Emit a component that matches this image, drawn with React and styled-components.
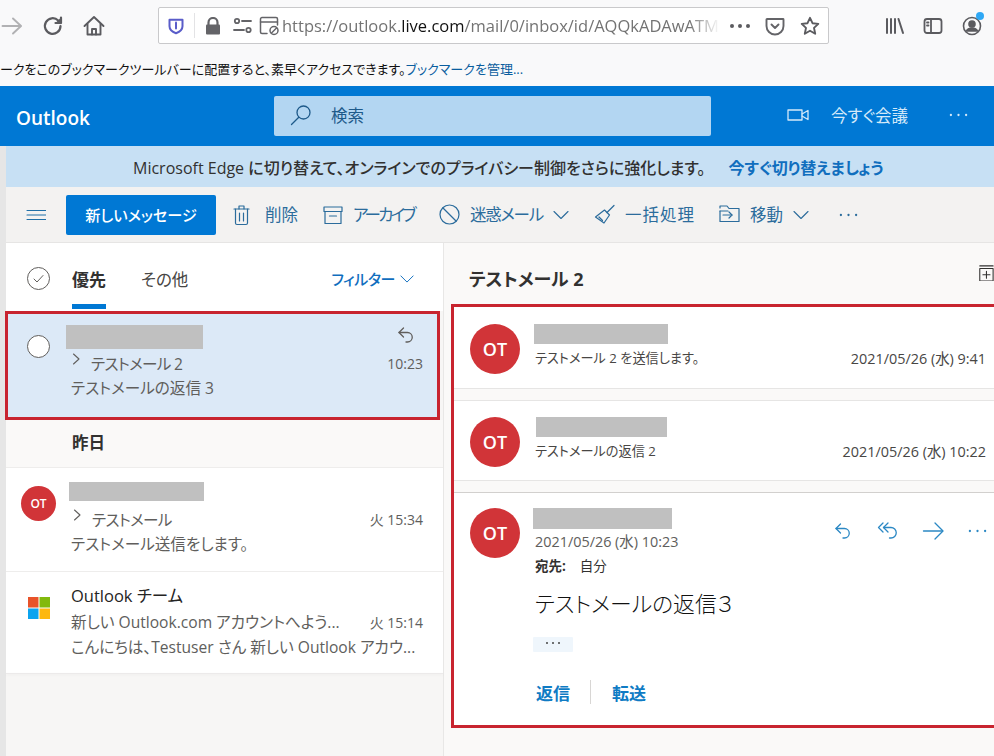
import React from 'react';
import styled, { createGlobalStyle } from 'styled-components';

const FONT = '"Open Sans", "Noto Sans CJK JP", sans-serif';

const GlobalStyle = createGlobalStyle`
  html, body {
    margin: 0;
    padding: 0;
    width: 994px;
    height: 756px;
    overflow: hidden;
    background: #ffffff;
    font-family: ${FONT};
    font-feature-settings: "palt";
  }
  * { box-sizing: border-box; }
`;

const Svg = ({ size = 20, w, h, vb = '0 0 20 20', color = 'currentColor', sw = 1.4, children, ...rest }) => (
  <svg
    width={w || size}
    height={h || size}
    viewBox={vb}
    fill="none"
    stroke={color}
    strokeWidth={sw}
    strokeLinecap="round"
    strokeLinejoin="round"
    style={{ flexShrink: 0, display: 'block' }}
    {...rest}
  >
    {children}
  </svg>
);

const Chevron = ({ size = 16, color }) => (
  <Svg size={size} vb="0 0 16 16" color={color} sw={1.1}><path d="M1 4.500l7 7 7-7" /></Svg>
);
const ChevronSlot = styled.span`
  display: block;
  margin-bottom: 8px;
`;
const ChevronRight = () => (
  <ChevronSlot>
    <Svg size={12} vb="0 0 12 12" color="#605e5c" sw={1.1}><path d="M3.500 1L9 6l-5.500 5" /></Svg>
  </ChevronSlot>
);
const ReplyIcon = ({ color = '#605e5c', size = 20 }) => (
  <Svg size={size} color={color} sw={1.3}>
    <path d="M7.500 3L3 7.500 7.500 12" /><path d="M3 7.500h8.500a4.700 4.700 0 0 1 0 9.500H10" />
  </Svg>
);
const ReplyAllIcon = ({ color }) => (
  <Svg size={24} vb="0 0 24 24" color={color} sw={1.3}>
    <path d="M7 4L2.500 8.500 7 13" /><path d="M12 4L7.500 8.500 12 13" /><path d="M7.500 8.500h7.500a5 5 0 0 1 0 10.500h-1.500" />
  </Svg>
);
const ForwardIcon = ({ color }) => (
  <Svg size={24} vb="0 0 24 24" color={color} sw={1.3}><path d="M2.500 12h19" /><path d="M14 4l8 8-8 8" /></Svg>
);
const Avatar = styled.div`
  width: ${(p) => p.$size}px;
  height: ${(p) => p.$size}px;
  border-radius: 50%;
  background: #d13438;
  color: #fff;
  font-weight: 600;
  font-size: ${(p) => p.$font}px;
  display: flex;
  align-items: center;
  justify-content: center;
  flex-shrink: 0;
`;

/* ---------- browser chrome ---------- */
const NavBar = styled.div`
  height: 52px;
  background: #f9f9fa;
  display: flex;
  align-items: center;
  color: #5b5b5f;
`;
const NavIcons = styled.div`
  width: 158px;
  flex-shrink: 0;
  display: flex;
  align-items: center;
  padding-left: 1px;
  gap: 19px;
`;
const UrlBar = styled.div`
  width: 671px;
  height: 37px;
  margin-bottom: 1px;
  background: #fff;
  border: 1px solid #c9c9cb;
  border-radius: 2px;
  display: flex;
  align-items: center;
  padding-left: 8px;
  flex-shrink: 0;
`;
const UrlDivider = styled.div`
  width: 1px;
  height: 25px;
  background: #e3e3e5;
  margin: 0 9px;
`;
const UrlText = styled.div`
  width: 438px;
  margin-left: 2px;
  font-size: 16.500px;
  white-space: nowrap;
  overflow: hidden;
  color: #737373;
  -webkit-mask-image: linear-gradient(to right, #000 93%, transparent);
  mask-image: linear-gradient(to right, #000 93%, transparent);
  b { font-weight: 400; color: #111; }
`;
const UrlActions = styled.div`
  display: flex;
  align-items: center;
  margin-left: 10px;
  gap: 15px;
`;
const NavRight = styled.div`
  display: flex;
  align-items: center;
  margin-left: 55px;
  gap: 19px;
`;
const Account = styled.div`
  position: relative;
`;
const BlueDot = styled.span`
  position: absolute;
  top: -4px;
  right: -2px;
  width: 8px;
  height: 8px;
  border-radius: 50%;
  background: #2fa8f5;
`;
const BookmarkBar = styled.div`
  height: 34px;
  background: #f9f9fa;
  display: flex;
  align-items: center;
  font-size: 13px;
  color: #111;
  white-space: nowrap;
  padding-bottom: 2px;
`;
const BookmarkLink = styled.span`
  color: #0a5e9f;
`;

/* ---------- outlook header ---------- */
const Header = styled.header`
  height: 60px;
  background: #0078d4;
  display: flex;
  align-items: center;
  color: #fff;
`;
const Brand = styled.div`
  width: 274px;
  padding-left: 16px;
  font-size: 19px;
  font-weight: 600;
  margin-top: 4px;
`;
const SearchBox = styled.div`
  width: 437px;
  height: 40px;
  background: #b3d6f2;
  border-radius: 2px;
  display: flex;
  align-items: center;
  padding: 0 0 3px 16px;
  gap: 19px;
  color: #1e5a8a;
  font-size: 16.500px;
`;
const HeaderRight = styled.div`
  display: flex;
  align-items: center;
  margin: 0 0 2px 76px;
  color: #d4e9f9;
  font-size: 16.500px;
`;
const MeetLabel = styled.span`
  margin-left: 22px;
`;
const HeaderDots = styled.span`
  margin-left: 41px;
  display: flex;
`;

/* ---------- main ---------- */
const Shell = styled.div`
  display: flex;
  height: 610px;
`;
const Strip = styled.div`
  width: 6px;
  background: #e6e6e6;
  flex-shrink: 0;
`;
const Main = styled.div`
  flex: 1;
  min-width: 0;
  display: flex;
  flex-direction: column;
`;
const Banner = styled.div`
  height: 41px;
  background: #c7e0f4;
  display: flex;
  align-items: center;
  padding-left: 127px;
  font-size: 16px;
  font-weight: 500;
  color: #323130;
  white-space: nowrap;
`;
const BannerLink = styled.span`
  margin-left: 23px;
  color: #106ebe;
  font-weight: 600;
`;
const Toolbar = styled.div`
  height: 56px;
  background: #f3f2f1;
  border-bottom: 1px solid #e6e5e4;
  display: flex;
  align-items: center;
  color: #2b6c9c;
  font-size: 16.500px;
  padding-left: 20px;
`;
const NewMessage = styled.button`
  width: 150px;
  height: 40px;
  margin-left: 20px;
  margin-right: 17px;
  background: #0078d4;
  color: #fff;
  border: 0;
  border-radius: 2px;
  font-family: ${FONT};
  font-feature-settings: "palt";
  font-size: 15.200px;
  font-weight: 500;
  padding: 0 0 2px;
`;
const ToolItem = styled.div`
  display: flex;
  align-items: center;
  gap: ${(p) => p.$gap || 10}px;
  margin-right: ${(p) => p.$after || 25}px;
  white-space: nowrap;
`;
const ToolLabel = styled.span`
  margin-top: -2px;
  letter-spacing: ${(p) => p.$ls || 0}px;
`;
const Body = styled.div`
  flex: 1;
  min-height: 0;
  display: flex;
`;

/* ---------- message list ---------- */
const ListPane = styled.div`
  width: 438px;
  background: #f7f6f5;
  border-right: 1px solid #e8e7e6;
  flex-shrink: 0;
`;
const TabsRow = styled.div`
  height: 68px;
  background: #fff;
  display: flex;
  align-items: center;
  padding: 3px 29px 0 21px;
`;
const RoundCheck = styled.div`
  width: 23px;
  height: 23px;
  border: 1.500px solid #605e5c;
  border-radius: 50%;
  display: flex;
  align-items: center;
  justify-content: center;
  flex-shrink: 0;
  color: #605e5c;
  background: ${(p) => (p.$filled ? '#fff' : 'transparent')};
`;
const Tab = styled.div`
  position: relative;
  font-size: ${(p) => (p.$active ? 17 : 16.5)}px;
  font-weight: ${(p) => (p.$active ? 700 : 400)};
  color: ${(p) => (p.$active ? '#323130' : '#484644')};
  margin-left: ${(p) => p.$left}px;
  white-space: nowrap;
`;
const TabLine = styled.span`
  position: absolute;
  left: 0;
  right: 0;
  top: 38px;
  height: 5px;
  background: #0078d4;
`;
const Filter = styled.div`
  margin-left: auto;
  display: flex;
  align-items: center;
  gap: 5px;
  color: #106ebe;
  font-size: 15px;
  font-weight: 500;
  letter-spacing: -0.400px;
`;
const Redacted = styled.div`
  width: ${(p) => p.$w}px;
  height: ${(p) => p.$h}px;
  background: #c0c0c0;
  margin-left: ${(p) => p.$left || 0}px;
  margin-top: ${(p) => p.$top || 0}px;
  flex-shrink: 0;
`;
const SelectedRow = styled.div`
  height: 109px;
  margin-left: -1px;
  margin-right: 3px;
  background: #dce9f7;
  border: 3px solid #c8242f;
  display: flex;
  color: #605e5c;
  font-size: 15.600px;
`;
const SelectColumn = styled.div`
  width: 58px;
  padding: 21px 0 0 19px;
  flex-shrink: 0;
`;
const RowBody = styled.div`
  flex: 1;
  min-width: 0;
  display: flex;
  flex-direction: column;
  padding-right: ${(p) => p.$right || 14}px;
`;
const TopLine = styled.div`
  display: flex;
  justify-content: space-between;
  align-items: flex-start;
`;
const ReplyMark = styled.span`
  margin: 11px 7px 0 0;
  display: block;
`;
const LineRow = styled.div`
  display: flex;
  align-items: center;
  justify-content: space-between;
  height: ${(p) => p.$h || 25}px;
  white-space: nowrap;
`;
const Subject = styled.div`
  display: flex;
  align-items: center;
  gap: 9px;
  letter-spacing: -0.700px;
  padding-left: ${(p) => p.$left || 0}px;
`;
const Preview = styled.div`
  line-height: 20px;
  margin-top: ${(p) => p.$top || 0}px;
  padding-left: ${(p) => p.$left || 0}px;
  white-space: nowrap;
`;
const TimeText = styled.span`
  font-size: 14px;
  letter-spacing: 0;
  color: #605e5c;
`;
const SectionHead = styled.div`
  height: 47px;
  display: flex;
  align-items: center;
  padding: 0 0 4px 66px;
  font-size: 16.500px;
  font-weight: 700;
  color: #323130;
  background: #faf9f8;
`;
const MailRow = styled.div`
  height: ${(p) => p.$h}px;
  background: #fff;
  border-top: 1px solid #eeedec;
  display: flex;
  color: #605e5c;
  font-size: 15.600px;
`;
const RowLead = styled.div`
  width: 65px;
  flex-shrink: 0;
  padding: ${(p) => p.$top}px 0 0 ${(p) => p.$left}px;
`;
const ListEnd = styled.div`
  height: 1px;
  background: #eceaea;
  box-shadow: 0 1px 3px rgba(0, 0, 0, 0.06);
`;
const SenderName = styled.div`
  font-size: 16.500px;
  color: #252423;
  margin-top: 12px;
  line-height: 24px;
`;

/* ---------- reading pane ---------- */
const ReadPane = styled.div`
  flex: 1;
  min-width: 0;
  background: #faf9f8;
  display: flex;
  flex-direction: column;
`;
const ThreadTitle = styled.div`
  height: 61px;
  padding: 23px 0 0 25px;
  display: flex;
  align-items: flex-start;
  justify-content: space-between;
  font-size: 18px;
  line-height: 27px;
  font-weight: 700;
  color: #323130;
`;
const ExpandSlot = styled.span`
  display: block;
  margin-top: -1px;
`;
const ThreadBox = styled.div`
  margin-left: 7px;
  height: 424px;
  border: 3px solid #c8242f;
  border-right: 0;
  display: flex;
  flex-direction: column;
  background: #faf9f8;
`;
const Card = styled.div`
  height: ${(p) => p.$h}px;
  margin-bottom: ${(p) => p.$gap || 0}px;
  background: #fff;
  border-bottom: 1px solid #e6e5e4;
  border-top: ${(p) => (p.$top ? '1px solid #e6e5e4' : 0)};
  display: flex;
  padding: ${(p) => p.$pad}px 8px 0 16px;
`;
const CardBody = styled.div`
  flex: 1;
  min-width: 0;
  padding-left: 14px;
  display: flex;
  flex-direction: column;
`;
const CardRow = styled.div`
  display: flex;
  align-items: center;
  justify-content: space-between;
  font-size: 13.200px;
  color: #484644;
  margin-top: ${(p) => p.$top}px;
  padding-left: 1px;
  white-space: nowrap;
`;
const DateText = styled.span`
  font-size: 14.400px;
  color: #484644;
`;
const OpenCard = styled.div`
  flex: 1;
  background: #fff;
  border-top: 1px solid #d2d0ce;
  display: flex;
  padding: 15px 8px 0 16px;
`;
const OpenHead = styled.div`
  display: flex;
  justify-content: space-between;
  align-items: flex-start;
  height: 21px;
`;
const ActionIcons = styled.div`
  display: flex;
  align-items: center;
  margin: 11px -14px 0 0;
  color: #2b88c4;
`;
const ActionSlot = styled.span`
  width: 45px;
  height: 24px;
  display: flex;
  align-items: center;
  justify-content: center;
`;
const OpenDate = styled.div`
  font-size: 14.400px;
  color: #605e5c;
  margin: 4px 0 0 1px;
  line-height: 18px;
`;
const ToLine = styled.div`
  display: flex;
  gap: 14px;
  font-size: 13.500px;
  color: #323130;
  margin: 7px 0 0 1px;
  line-height: 16px;
  b { font-weight: 700; }
`;
const MessageText = styled.div`
  font-size: 21.800px;
  font-weight: 300;
  color: #111;
  margin: 16px 0 0 1px;
  line-height: 28px;
`;
const MoreChip = styled.div`
  width: 40px;
  height: 15px;
  background: #eff6fc;
  margin: 19px 0 0 -1px;
  border-radius: 1px;
  display: flex;
  align-items: flex-start;
  justify-content: center;
  padding-top: 5px;
  gap: 4px;
`;
const ChipDot = styled.span`
  width: 2px;
  height: 2px;
  background: #444;
  border-radius: 50%;
`;
const ReplyRow = styled.div`
  display: flex;
  align-items: center;
  height: 24px;
  margin: 28px 0 0 2px;
  font-size: 17px;
  font-weight: 700;
  color: #0f7bc4;
`;
const ReplyDivider = styled.span`
  width: 1px;
  height: 24px;
  background: #d8d6d4;
  margin: 0 21px 0 20px;
`;

const MsLogo = () => (
  <svg width="22" height="22" viewBox="0 0 22 22" style={{ display: 'block' }}>
    <rect x="0" y="0" width="10.500" height="10.500" fill="#e8532a" />
    <rect x="11.500" y="0" width="10.500" height="10.500" fill="#82b90d" />
    <rect x="0" y="11.500" width="10.500" height="10.500" fill="#0ca4ef" />
    <rect x="11.500" y="11.500" width="10.500" height="10.500" fill="#fdb80f" />
  </svg>
);

const Dots = ({ color = 'currentColor', w = 20, r = 1.2 }) => (
  <svg width={w} height="6" viewBox="0 0 20 6" style={{ display: 'block' }}>
    <circle cx="2" cy="3" r={r} fill={color} />
    <circle cx="10" cy="3" r={r} fill={color} />
    <circle cx="18" cy="3" r={r} fill={color} />
  </svg>
);

const App = () => (
  <>
    <GlobalStyle />
    <NavBar>
      <NavIcons>
        <Svg size={22} color="#b1b1b3" sw={1.9} vb="0 0 22 22"><path d="M1.500 11h18" /><path d="M12 3.500L20 11l-8 7.500" /></Svg>
        <Svg size={22} sw={2.2} vb="0 0 22 22"><path d="M18.500 11a7.800 7.800 0 1 1-2.300-5.500L18.500 8" /><path d="M19 2.500V8h-5.500" fill="#5b5b5f" /></Svg>
        <Svg size={22} sw={1.9} vb="0 0 22 22"><path d="M1.500 11L11 2l9.500 9" /><path d="M4.500 9v10.500h13V9" /><path d="M9 19.500V14h4v5.500" /></Svg>
      </NavIcons>
      <UrlBar>
        <Svg size={18} color="#5a5dc9" sw={2} vb="0 0 18 18"><path d="M2.500 2.800h13v6.500c0 3.500-3 5.700-6.500 7-3.500-1.300-6.500-3.500-6.500-7z" /><path d="M9 5.500v6" stroke="#5a5dc9" /></Svg>
        <UrlDivider />
        <svg width="18" height="18" viewBox="0 0 18 18" style={{ display: 'block', flexShrink: 0 }}>
          <path d="M4.500 8V5.500a4.500 4.500 0 0 1 9 0V8" fill="none" stroke="#646468" strokeWidth="2.2" />
          <rect x="2" y="7.500" width="14" height="10" rx="1" fill="#646468" />
        </svg>
        <Svg w={20} h={18} vb="0 0 20 18" sw={1.8} style={{ marginLeft: 11, display: 'block', flexShrink: 0 }} color="#646468">
          <circle cx="4" cy="4" r="2.200" /><path d="M9 4h9" /><circle cx="15.500" cy="13" r="2.200" /><path d="M1 13h10" />
        </Svg>
        <Svg w={21} h={20} vb="0 0 21 20" sw={1.5} style={{ marginLeft: 6, display: 'block', flexShrink: 0 }} color="#646468">
          <path d="M8 17.500H3a1.500 1.500 0 0 1-1.500-1.500V3A1.500 1.500 0 0 1 3 1.500h14A1.500 1.500 0 0 1 18.500 3v6" /><path d="M1.500 6h17" /><circle cx="15" cy="14.500" r="4" /><path d="M12.500 17l5-5" />
        </Svg>
        <UrlText>https://outlook.<b>live.com</b>/mail/0/inbox/id/AQQkADAwATM</UrlText>
        <UrlActions>
          <Dots color="#5b5b5f" w={20} r={2} />
          <Svg w={20} h={20} color="#646468" sw={1.9}><path d="M2 3h16a.5.5 0 0 1 .5.5V10a8.500 8.500 0 0 1-17 0V3.500A.5.5 0 0 1 2 3z" /><path d="M6.500 8.500L10 12l3.500-3.500" /></Svg>
          <Svg size={20} color="#5b5b5f" sw={1.9}><path d="M10 1.800l2.500 5.400 5.800.7-4.300 4 1.200 5.800-5.200-3-5.200 3 1.200-5.800-4.300-4 5.800-.7z" /></Svg>
        </UrlActions>
      </UrlBar>
      <NavRight>
        <Svg size={20} sw={2}><path d="M3 3v14" /><path d="M7 3v14" /><path d="M11 3v14" /><path d="M14.500 3L19 17" /></Svg>
        <Svg size={20} sw={1.8}><rect x="1.500" y="3" width="17" height="14" rx="2.500" /><path d="M8 3v14" /><path d="M4 6.500h1.500M4 9.500h1.500" /></Svg>
        <Account>
          <Svg size={20} sw={1.6}><circle cx="10" cy="10" r="8.500" /><circle cx="10" cy="8" r="3" fill="#5b5b5f" /><path d="M4.500 15c1-2.500 3-3 5.500-3s4.500.5 5.500 3z" fill="#5b5b5f" /></Svg>
          <BlueDot />
        </Account>
      </NavRight>
    </NavBar>
    <BookmarkBar>
      ークをこのブックマークツールバーに配置すると、素早くアクセスできます。
      <BookmarkLink>ブックマークを管理...</BookmarkLink>
    </BookmarkBar>

    <Header>
      <Brand>Outlook</Brand>
      <SearchBox>
        <Svg size={22} vb="0 0 22 22" color="#1e5a8a" sw={1.3}><circle cx="13.500" cy="8.500" r="6.500" /><path d="M8.800 13.200L1.500 20.500" /></Svg>
        検索
      </SearchBox>
      <HeaderRight>
        <Svg w={22} h={14} vb="0 0 22 14" sw={1.3}><rect x="1" y="2" width="14" height="10" /><path d="M15 6l6-3.500v9L15 8" /></Svg>
        <MeetLabel>今すぐ会議</MeetLabel>
        <HeaderDots><Dots w={19} /></HeaderDots>
      </HeaderRight>
    </Header>

    <Shell>
      <Strip />
      <Main>
        <Banner>
          Microsoft Edge に切り替えて、オンラインでのプライバシー制御をさらに強化します。
          <BannerLink>今すぐ切り替えましょう</BannerLink>
        </Banner>
        <Toolbar>
          <Svg size={20} sw={1.1} color="#1f6fa8"><path d="M1 5.500h19M1 10h19M1 14.500h19" /></Svg>
          <NewMessage>新しいメッセージ</NewMessage>
          <ToolItem $gap={15}>
            <Svg w={17} h={22} vb="0 0 17 22" sw={1.2}><path d="M1 5h15" /><path d="M6 5V2h5v3" /><path d="M2.500 5v14a1.500 1.500 0 0 0 1.500 1.500h9a1.500 1.500 0 0 0 1.500-1.500V5" /><path d="M6.500 9v8M10.500 9v8" /></Svg>
            <ToolLabel>削除</ToolLabel>
          </ToolItem>
          <ToolItem>
            <Svg size={20} sw={1.2}><path d="M1 2h18v4.500H1z" /><path d="M2 6.500v12h16v-12" /><path d="M6.500 11h7" /></Svg>
            <ToolLabel $ls={-2.8}>アーカイブ</ToolLabel>
          </ToolItem>
          <ToolItem>
            <Svg size={21} vb="0 0 21 21" sw={1.2}><circle cx="10.500" cy="10.500" r="9.500" /><path d="M4 4l13 13" /></Svg>
            <ToolLabel $ls={-1.2}>迷惑メール</ToolLabel>
            <Chevron />
          </ToolItem>
          <ToolItem $after={24}>
            <Svg size={21} vb="0 0 21 21" sw={1.2}><path d="M20 1.500l-7 7" /><path d="M10.500 6l5 5-5.500 8L1.500 13z" /><path d="M5 13l3.500 3.500" /></Svg>
            <ToolLabel $ls={1}>一括処理</ToolLabel>
          </ToolItem>
          <ToolItem $after={30}>
            <Svg size={21} vb="0 0 21 21" sw={1.2}><path d="M1 4V2h7l2 2.500h10v13H1V7" /><path d="M1 7h8" /><path d="M4 11h9" /><path d="M10 8l3 3-3 3" /></Svg>
            <ToolLabel>移動</ToolLabel>
            <Chevron />
          </ToolItem>
          <Dots w={19} />
        </Toolbar>
        <Body>
          <ListPane>
            <TabsRow>
              <RoundCheck>
                <Svg size={13} vb="0 0 13 13" sw={1}><path d="M2 7l3 3 6-6.500" /></Svg>
              </RoundCheck>
              <Tab $active $left={22}>優先<TabLine /></Tab>
              <Tab $left={35}>その他</Tab>
              <Filter>フィルター<Chevron size={14} color="#106ebe" /></Filter>
            </TabsRow>
            <SelectedRow>
              <SelectColumn><RoundCheck $filled /></SelectColumn>
              <RowBody>
                <TopLine>
                  <Redacted $w={137} $h={24} $top={11} />
                  <ReplyMark><ReplyIcon /></ReplyMark>
                </TopLine>
                <LineRow $h={28}>
                  <Subject $left={4}><ChevronRight />テストメール 2</Subject>
                  <TimeText>10:23</TimeText>
                </LineRow>
                <Preview $left={5} $top={1}>テストメールの返信 3</Preview>
              </RowBody>
            </SelectedRow>
            <SectionHead>昨日</SectionHead>
            <MailRow $h={104}>
              <RowLead $top={18} $left={15}><Avatar $size={35} $font={12}>OT</Avatar></RowLead>
              <RowBody $right={20}>
                <Redacted $w={135} $h={19} $left={-2} $top={14} />
                <LineRow $h={36}>
                  <Subject><ChevronRight />テストメール</Subject>
                  <TimeText>火 15:34</TimeText>
                </LineRow>
                <Preview $top={-3}>テストメール送信をします。</Preview>
              </RowBody>
            </MailRow>
            <MailRow $h={102}>
              <RowLead $top={25} $left={22}><MsLogo /></RowLead>
              <RowBody $right={20}>
                <SenderName>Outlook チーム</SenderName>
                <LineRow $h={27}>
                  <Preview>新しい Outlook.com アカウントへよう...</Preview>
                  <TimeText>火 15:14</TimeText>
                </LineRow>
                <Preview $top={2}>こんにちは、Testuser さん 新しい Outlook アカウ...</Preview>
              </RowBody>
            </MailRow>
            <ListEnd />
          </ListPane>

          <ReadPane>
            <ThreadTitle>
              テストメール 2
              <ExpandSlot>
                <Svg size={16} vb="0 0 16 18" sw={1.2} color="#323130">
                  <path d="M1 1h15" /><path d="M1 4h15v14H1z" /><path d="M8.500 7v8M4.500 11h8" />
                </Svg>
              </ExpandSlot>
            </ThreadTitle>
            <ThreadBox>
              <Card $h={82} $gap={11} $pad={17}>
                <Avatar $size={50} $font={18}>OT</Avatar>
                <CardBody>
                  <Redacted $w={134} $h={20} />
                  <CardRow $top={3}>
                    テストメール 2 を送信します。
                    <DateText>2021/05/26 (水) 9:41</DateText>
                  </CardRow>
                </CardBody>
              </Card>
              <Card $h={81} $gap={11} $pad={16} $top>
                <Avatar $size={50} $font={18}>OT</Avatar>
                <CardBody>
                  <Redacted $w={131} $h={20} $left={2} />
                  <CardRow $top={3}>
                    テストメールの返信 2
                    <DateText>2021/05/26 (水) 10:22</DateText>
                  </CardRow>
                </CardBody>
              </Card>
              <OpenCard>
                <Avatar $size={50} $font={18}>OT</Avatar>
                <CardBody>
                  <OpenHead>
                    <Redacted $w={139} $h={21} $left={-1} />
                    <ActionIcons>
                      <ActionSlot><ReplyIcon color="#2b88c4" /></ActionSlot>
                      <ActionSlot><ReplyAllIcon color="#2b88c4" /></ActionSlot>
                      <ActionSlot><ForwardIcon color="#2b88c4" /></ActionSlot>
                      <ActionSlot><Dots color="#2b88c4" w={19} /></ActionSlot>
                    </ActionIcons>
                  </OpenHead>
                  <OpenDate>2021/05/26 (水) 10:23</OpenDate>
                  <ToLine><b>宛先:</b>自分</ToLine>
                  <MessageText>テストメールの返信３</MessageText>
                  <MoreChip><ChipDot /><ChipDot /><ChipDot /></MoreChip>
                  <ReplyRow>返信<ReplyDivider />転送</ReplyRow>
                </CardBody>
              </OpenCard>
            </ThreadBox>
          </ReadPane>
        </Body>
      </Main>
    </Shell>
  </>
);

export default App;
